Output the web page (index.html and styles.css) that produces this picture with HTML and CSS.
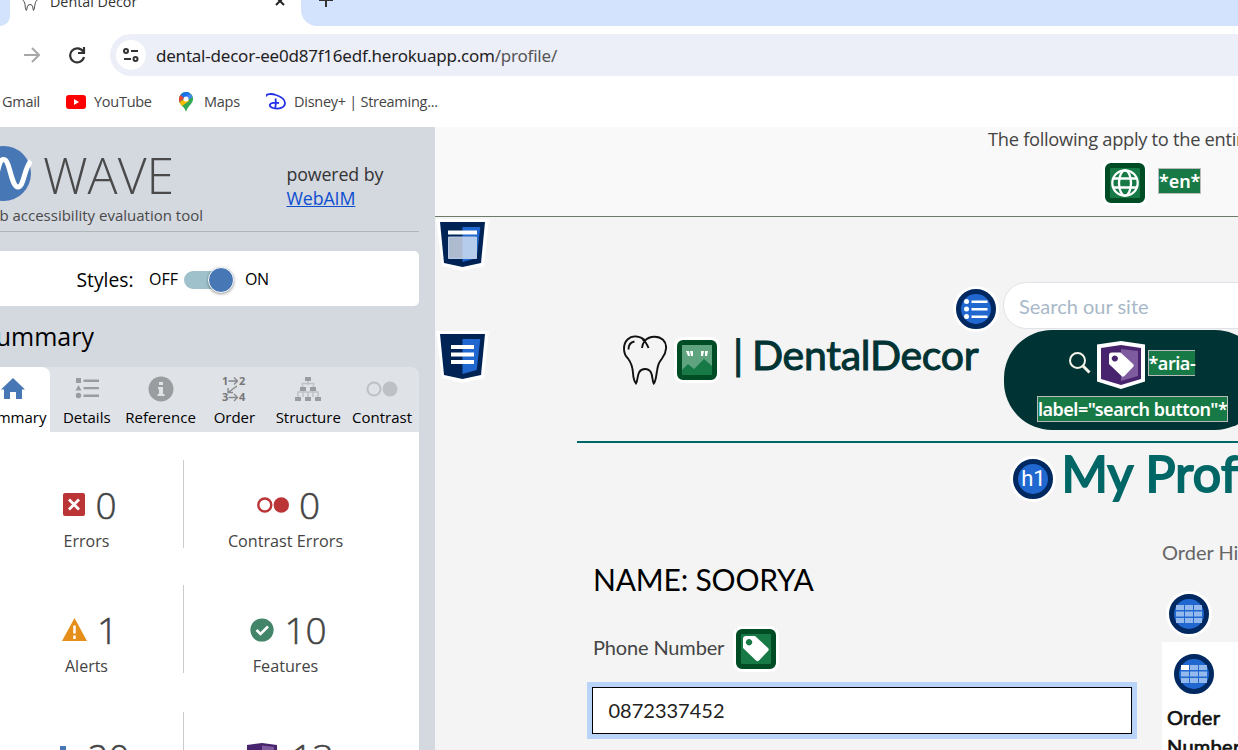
FILE: index.html
```html
<!DOCTYPE html>
<html lang="en">
<head>
<meta charset="utf-8">
<title>Dental Decor</title>
<link rel="stylesheet" href="styles.css">
</head>
<body>
<svg class="defs" width="0" height="0">
  <symbol id="tooth" viewBox="0 0 44 50"><path d="M22 5.500C17 0.500 9 0 4.500 4.500S-0.500 18 5 23.500C8.500 28 9.500 31 10 38c0.300 5 1 8 3 10.500 2.500-3 0-14.500 9-14.500s6.500 11.500 8.700 14.500C33 46 33 41 34 36c1-6 1.500-8 5-12.500C44 17 44.500 9 40 4.800S27 0.500 22 5.500Q19.500 8.500 19 13M19 4Q23 6.500 25.500 13M5.500 14.500Q5.500 7.500 11.500 6.500"/></symbol>
  <symbol id="tag" viewBox="0 0 26 26"><path fill-rule="evenodd" d="M0 3Q0 0 3 0H12L25 12Q26.500 13.500 25 15L16 24.500Q14.500 26 13 24.500L0 12ZM6 3a3.200 3.200 0 1 0 .1 0Z"/></symbol>
</svg>
<div class="tabstrip">
  <div class="strip-left"></div>
  <div class="tab">
    <svg class="tab-tooth" width="18" height="20"><use href="#tooth"/></svg>
    <span class="tab-title">Dental Decor</span>
    <svg class="tab-close" width="10" height="10" viewBox="0 0 10 10"><path d="M1 1l8 8M9 1l-8 8"/></svg>
  </div>
  <div class="strip-right"><svg width="14" height="14" viewBox="0 0 14 14"><path d="M0 7h14M7 0v14"/></svg></div>
</div>
<div class="toolbar">
  <svg class="forward" width="16" height="16" viewBox="0 0 16 16"><path d="M0 8h15M8 1l7 7-7 7"/></svg>
  <svg class="reload" width="18" height="18" viewBox="0 0 18 18"><path d="M15 5.500A7 7 0 1 0 16 11M16 1v6h-6"/></svg>
  <div class="omnibox">
    <div class="site-info"><svg width="16" height="14" viewBox="0 0 16 14"><g fill="none" stroke="#333" stroke-width="2"><circle cx="3" cy="3" r="2"/><path d="M8 3h7M1 11h7"/><circle cx="12.500" cy="11" r="2"/></g></svg></div>
    <span class="url">dental-decor-ee0d87f16edf.herokuapp.com<span class="path">/profile/</span></span>
  </div>
</div>
<div class="bookmarks">
  <span class="bm gmail">Gmail</span>
  <svg class="yt" width="20" height="14" viewBox="0 0 20 14"><rect width="20" height="14" rx="3" fill="#f00"/><path d="M8 4l5 3-5 3z" fill="#fff"/></svg>
  <span class="bm youtube">YouTube</span>
  <svg class="pin" width="14" height="20" viewBox="0 0 14 20"><path d="M0.500 10.500C-1 5 2 0 7 0s8.500 5 6.500 9.500C12 13 9 14 7 20 6 15 2 14 .500 10.500z" fill="#34a853"/><path d="M1.500 3C3.500 0 8 -1 11 1.500L4 9Z" fill="#1a73e8"/><path d="M1.500 3L5 6 0.500 10.500Q-1 6 1.500 3z" fill="#ea4335"/><path d="M.500 10.500L9 4l1 5L3 14Z" fill="#fbbc04"/><path d="M11 1.500Q13 3 13.500 5L9 8 7 5Z" fill="#4285f4"/><circle cx="7" cy="7" r="2.500" fill="#fff"/></svg>
  <span class="bm maps">Maps</span>
  <svg class="disney" width="20" height="17" viewBox="0 0 20 17"><path d="M.500 3.500C-.500 .500 6 .500 10 2c6 2 9 4.500 9 8 0 5-6.500 6.500-12 5-4.500-1.300-4-4.500 0-5.200q3-.500 6 .200M9.500 5.500Q10.200 10 9.300 15"/></svg>
  <span class="bm dis">Disney+ | Streaming...</span>
</div>
<div class="main">
  <aside class="sidebar">
    <div class="wave-head">
      <div class="wave-brand">
        <div class="wave-row">
          <svg width="32" height="56" viewBox="0 0 32 56"><circle cx="3.500" cy="27.500" r="27.500" fill="#4877b6"/><path d="M-5 37C-1 18 0 13 4 13.500 10 14 11 41 18 41 24 41 24 22 31 15" fill="none" stroke="#fff" stroke-width="5"/></svg>
          <span class="wave-name">WAVE</span>
        </div>
        <div class="tagline"><span>web accessibility evaluation tool</span></div>
      </div>
      <div class="powered">powered by<br><a>WebAIM</a></div>
    </div>
    <div class="styles-box">
      <span class="styles-label">Styles:</span><span class="off">OFF</span>
      <span class="switch"><span class="knob"></span></span><span class="on">ON</span>
    </div>
    <h2 class="summary-title"><span>Summary</span></h2>
    <nav class="tabs">
      <div class="wtab active"><svg width="26" height="24" viewBox="0 0 26 24"><path d="M13 1L1 12.500h3V22h6v-7h6v7h6v-9.500h3z" fill="#4877b6"/></svg><span>Summary</span></div>
      <div class="wtab"><svg class="details" width="24" height="24" viewBox="0 0 24 24"><g fill="#9a9d9f"><path d="M1 2h5v5H1zM3.500 9L6.500 14.500H.500zM8.500 3.500H24V6H8.500zM8.500 11H24v2.300H8.500zM8.500 18.500H24v2.500H8.500z"/><circle cx="3.500" cy="19.500" r="2.700"/></g></svg><span>Details</span></div>
      <div class="wtab"><svg width="26" height="26" viewBox="0 0 26 26"><circle cx="13" cy="13" r="12.500" fill="#9a9d9f"/><path d="M11 6h4v3h-4zM10 11h5v7h1.500v2H9.500v-2H11v-5h-1z" fill="#dfe2e7"/></svg><span>Reference</span></div>
      <div class="wtab"><svg class="order" width="26" height="26" viewBox="0 0 26 26"><g class="digits"><text x="1" y="8.500">1</text><text x="18" y="8.500">2</text><text x="1" y="25">3</text><text x="18" y="25">4</text></g><path d="M7.500 5h9M13 1.500l3.500 3.500-3.500 3.500M7.500 21.500h9M13 18l3.500 3.500-3.500 3.500M16 10l-9 6.500M7 12v4.500h5" fill="none" stroke="#85888a" stroke-width="1.300"/></svg><span>Order</span></div>
      <div class="wtab"><svg width="26" height="26" viewBox="0 0 26 26"><path d="M13 4v5M7.500 12V7.500h11V12M3 21v-5h20v5M8 13v8M18 13v8M13 16v5" fill="none" stroke="#bfc2c6" stroke-width="1.500"/><path d="M10 1h6v4h-6zM5 11h6v4H5zM15 11h6v4h-6zM0 21h6v4H0zM10 21h6v4h-6zM20 21h6v4h-6z" fill="#9a9d9f"/></svg><span>Structure</span></div>
      <div class="wtab"><svg width="32" height="26" viewBox="0 0 32 26"><circle cx="8" cy="13" r="6.500" fill="none" stroke="#bdc1c6" stroke-width="2"/><circle cx="24" cy="13" r="7.500" fill="#bdc1c6"/></svg><span>Contrast</span></div>
    </nav>
    <div class="panel">
      <div class="stat"><div class="num"><svg width="22" height="23" viewBox="0 0 22 23"><rect width="22" height="23" rx="2" fill="#bb3537"/><path d="M6 6.500l10 10M16 6.500l-10 10" stroke="#fff" stroke-width="2.800"/></svg>0</div><div class="lbl">Errors</div></div>
      <div class="stat line"><div class="num"><svg width="32" height="16" viewBox="0 0 32 16"><circle cx="7.800" cy="8" r="6.500" fill="none" stroke="#bb3537" stroke-width="2.400"/><circle cx="24.300" cy="8" r="7.700" fill="#bb3537"/></svg>0</div><div class="lbl contrast">Contrast Errors</div></div>
      <div class="stat"><div class="num alert"><svg width="25" height="23" viewBox="0 0 25 23"><path d="M12.500 0L25 23H0z" fill="#e58e1a"/><path d="M12.500 7.500v8M12.500 17.500V21" stroke="#fff" stroke-width="2.500"/></svg>1</div><div class="lbl">Alerts</div></div>
      <div class="stat line"><div class="num"><svg width="24" height="24" viewBox="0 0 24 24"><circle cx="12" cy="12" r="11.600" fill="#428568"/><path d="M6.500 12l4 4 7.500-7.500" fill="none" stroke="#fff" stroke-width="2.500"/></svg>10</div><div class="lbl contrast">Features</div></div>
      <div class="stat"><div class="num last"><svg width="23" height="24" viewBox="0 0 23 24"><path d="M6 1h6v4h-2v5h6v4h-2v-2H8V5H6z" fill="#4877b6"/></svg>20</div></div>
      <div class="stat line"><div class="num last wide"><svg width="30" height="28" viewBox="0 0 30 28"><path d="M0 2L15 0l15 2v22l-15 4-15-4z" fill="#47246d"/><path d="M15 2.500l12 1.500V22l-12 4z" fill="#7e5b9e"/></svg>13</div></div>
    </div>
  </aside>
  <section class="page">
    <div class="notice">
      <div class="notice-text">The following apply to the entire page:</div>
      <div class="notice-row">
        <div class="green"><svg width="28" height="28" viewBox="0 0 28 28" fill="none" stroke="#fff" stroke-width="2.300"><circle cx="14" cy="14" r="12.700"/><ellipse cx="14" cy="14" rx="6" ry="12.700"/><path d="M2.500 9.500h23M2.500 18.500h23"/></svg></div>
        <span class="mark">*en*</span>
      </div>
    </div>
    <div class="site">
      <div class="rail">
        <svg class="region" width="54" height="54" viewBox="0 0 54 54"><path d="M1 1h53l-5 47-21 5-21-5z" fill="#fff"/><path d="M5 4h45l-4 41-18.500 4L9 45z" fill="#002356"/><path d="M27.500 9h17.800l-3.600 31-14.200 4z" fill="#2068d0"/><path d="M13 12.500h29v4H13z" fill="#fff"/><path d="M13.500 19h28v21.500h-28z" fill="#e8edf5" fill-opacity=".75" stroke="#b8cbe6"/></svg>
        <svg class="region" width="54" height="54" viewBox="0 0 54 54"><path d="M1 1h53l-5 47-21 5-21-5z" fill="#fff"/><path d="M5 4h45l-4 41-18.500 4L9 45z" fill="#002356"/><path d="M27.500 9h17.800l-3.600 31-14.200 4z" fill="#2068d0"/><path d="M16 15h23v4H16zM16 22.500h23v4H16zM16 30h23v4H16z" fill="#fff"/></svg>
      </div>
      <div class="body">
        <header class="site-head">
          <div class="brand">
            <svg class="logo" width="44" height="50" viewBox="0 0 44 50"><use href="#tooth"/></svg>
            <div class="green"><svg width="30" height="30" viewBox="0 0 30 30"><path d="M0 0h30v30H0z" fill="#5fa47f"/><path d="M0 25l6-6 6 5 10-10 8 7v9H0z" fill="#177a46"/><path d="M4 6h3l1 5H6zM8 6h3v5H9zM19 6h3l-1 5h-2zM23 6h3l-1 5h-2z" fill="#fff"/></svg></div>
            <span class="name"><span class="bar">|</span>DentalDecor</span>
          </div>
          <div class="circle list"><svg width="28" height="24" viewBox="0 0 28 24" fill="#fff"><circle cx="4.500" cy="4.500" r="2.500"/><circle cx="4.500" cy="12" r="2.500"/><circle cx="4.500" cy="19.500" r="2.500"/><path d="M9.500 3.500h16v2.500h-16zM9.500 11h16v2.500h-16zM9.500 18.500h16V21h-16z"/></svg></div>
          <div class="search">
            <div class="field">Search our site</div>
            <div class="button">
              <div class="brow">
                <svg class="lens" width="22" height="22" viewBox="0 0 22 22"><circle cx="8.500" cy="8.500" r="7.500" fill="none" stroke="#f4f4e8" stroke-width="2"/><path d="M13.500 13.500l7 7" stroke="#f4f4e8" stroke-width="3"/></svg>
                <svg width="48" height="48" viewBox="0 0 48 48"><path d="M0 3.500L24 0l24 3.500v37L24 48 0 40.500z" fill="#fff"/><path d="M4 7l20-3 20 3v31l-20 6-20-6z" fill="#47246d"/><path d="M24 8l17 2v25l-17 5z" fill="#7e5b9e"/><svg x="12" y="11" width="25" height="26"><use href="#tag" fill="#fff"/></svg></svg>
                <span class="mark aria">*aria-</span>
              </div>
              <span class="mark label">label="search button"*</span>
            </div>
          </div>
        </header>
        <div class="title-row"><div class="circle h1">h1</div><h1>My Profile</h1></div>
        <div class="columns">
          <div class="profile">
            <div class="person">NAME: SOORYA</div>
            <div class="phone"><span>Phone Number</span><div class="green"><svg width="26" height="26"><use href="#tag" fill="#fff"/></svg></div></div>
            <div class="phone-field">0872337452</div>
          </div>
          <div class="orders">
            <div class="orders-title">Order History</div>
            <div class="circle table"><svg width="26" height="18" viewBox="0 0 26 18" fill="#94b9ed"><path d="M0 0h8v5H0zM9 0h8v5H9zM18 0h8v5h-8zM0 6.500h8v5H0zM9 6.500h8v5H9zM18 6.500h8v5h-8zM0 13h8v5H0zM9 13h8v5H9zM18 13h8v5h-8z"/></svg></div>
            <div class="otable">
              <div class="circle"><svg width="26" height="18" viewBox="0 0 26 18" fill="#94b9ed"><path d="M9 0h8v5H9zM18 0h8v5h-8zM0 6.500h8v5H0zM9 6.500h8v5H9zM18 6.500h8v5h-8zM0 13h8v5H0zM9 13h8v5H9zM18 13h8v5h-8z"/><path d="M0 0h8v5H0z" fill="#fff"/></svg></div>
              <div class="oth">Order<br>Number</div>
            </div>
          </div>
        </div>
      </div>
    </div>
  </section>
</div>
</body>
</html>
```
FILE: styles.css
```css
* { box-sizing: border-box; }
body { margin: 0; width: 1238px; height: 750px; overflow: hidden; background: #fff; display: flex; flex-direction: column; font-family: "Open Sans", sans-serif; white-space: nowrap; }
svg { display: block; flex: none; }
.defs { position: absolute; }
#tooth path { fill: none; stroke: #111; stroke-width: 1.9; }

.tabstrip { height: 26px; display: flex; flex: none; background: #fff; overflow: hidden; }
.strip-left { width: 10px; background: #d3e3fd; border-bottom-right-radius: 12px; }
.tab { width: 291px; display: flex; align-items: flex-start; }
.tab-tooth { margin: -9px 0 0 11px; }
.tab-title { width: 225px; margin: -8px 0 0 11px; font-size: 14.300px; line-height: 20px; color: #333; }
.tab-close { margin-top: -4px; stroke: #222; stroke-width: 2; }
.strip-right { flex: 1; background: #d3e3fd; border-bottom-left-radius: 16px; padding-left: 18px; stroke: #333; stroke-width: 2; }
.strip-right svg { margin-top: -7px; }

.toolbar { height: 50px; flex: none; display: flex; align-items: center; padding: 7px 0 0 24px; }
.forward { fill: none; stroke: #a8a8a8; stroke-width: 2; }
.reload { margin-left: 28px; fill: none; stroke: #333; stroke-width: 2.2; }
.omnibox { margin-left: 24px; flex: 1; height: 42px; background: #eceef8; border-radius: 21px 0 0 21px; display: flex; align-items: center; padding-left: 6px; }
.site-info { width: 30px; height: 30px; border-radius: 50%; background: #fff; display: flex; align-items: center; justify-content: center; }
.url { margin: 1px 0 0 10px; font-family: "Noto Sans", sans-serif; font-size: 17px; letter-spacing: -0.22px; color: #1f1f1f; }
.path { color: #555; }

.bookmarks { height: 51px; flex: none; display: flex; align-items: center; font-size: 14.500px; letter-spacing: -0.27px; color: #444; padding-left: 2px; }
.bm { flex: none; }
.gmail { width: 64px; }
.youtube { margin-left: 8px; width: 85px; }
.maps { margin-left: 11px; width: 62px; }
.dis { margin-left: 8px; }
.disney { fill: none; stroke: #2230e8; stroke-width: 1.800; }

.main { flex: 1; min-height: 0; display: flex; }
.sidebar { width: 435px; flex: none; background: #d4d8df; padding-right: 16px; display: flex; flex-direction: column; overflow: hidden; }
.wave-head { height: 105px; flex: none; border-bottom: 1px solid #b0b5bb; display: flex; }
.wave-brand { width: 286.500px; color: #4a4a4a; padding-top: 19px; }
.wave-row { display: flex; height: 56px; }
.wave-name { margin-left: 11px; font-size: 50px; font-weight: 300; line-height: 58px; }
.tagline { width: 203px; display: flex; justify-content: flex-end; font-size: 15px; line-height: 26px; overflow: hidden; }
.powered { padding-top: 35px; font-size: 17.800px; letter-spacing: -0.12px; line-height: 24px; color: #333; }
.powered a { color: #0b4fd0; text-decoration: underline; }
.styles-box { margin-top: 19px; height: 55px; flex: none; background: #fff; border-radius: 0 5px 5px 0; padding-left: 76.500px; display: flex; align-items: center; font-size: 16px; }
.styles-label { width: 72.500px; font-size: 19.300px; padding-top: 2px; }
.off { width: 35px; }
.switch { width: 50px; height: 18px; border-radius: 9px; background: #9fc1cb; display: flex; align-items: center; justify-content: flex-end; margin-top: 3px; }
.knob { width: 26px; height: 26px; flex: none; border-radius: 50%; background: #4877b6; border: 1px solid #fff; box-shadow: 0 1px 3px #0006; }
.on { margin-left: 11px; letter-spacing: -0.4px; }
.summary-title { margin: 0; height: 61px; width: 94px; display: flex; justify-content: flex-end; font-size: 25px; font-weight: 400; line-height: 61px; flex: none; overflow: hidden; }
.tabs { margin-left: -24px; height: 65px; flex: none; display: flex; background: #dfe2e7; border-radius: 0 8px 0 0; }
.wtab { flex: 1 1 0; min-width: 0; display: flex; flex-direction: column; align-items: center; font-size: 15px; }
.wtab svg { margin: 9px 0 3px; height: 26px; }
.wtab .details { margin: 8px 0 4px; }
.wtab span { line-height: 24px; }
.active { background: #fff; border-radius: 0 8px 0 0; }
.digits { font-size: 11px; font-weight: 700; fill: #777; }
.panel { flex: 1; min-height: 0; background: #fff; padding-top: 28px; display: grid; grid-template-columns: 183px 203px; grid-template-rows: 125px 127px 88px; overflow: hidden; }
.stat { color: #444; height: 88px; }
.stat:nth-child(odd) { margin-left: -10px; }
.line { border-left: 1px solid #c9cbce; }
.num { display: flex; align-items: center; justify-content: center; gap: 10px; font-size: 37px; font-weight: 300; -webkit-text-stroke: 0.5px #444; line-height: 40px; padding: 25px 0 0 7px; }
.num svg { margin-top: -1px; }
.last { padding-left: 11px; }
.wide { gap: 14px; }
.lbl { text-align: center; font-size: 16px; line-height: 32px; }
.contrast { font-size: 16.200px; padding-left: 1px; }

.page { flex: 1; min-width: 0; background: #f4f4f4; overflow: hidden; }
.notice { height: 90px; background: #f9f9f9; border-bottom: 1px solid #6d7b6b; color: #444; }
.notice-text { padding-left: 553px; font-size: 18.300px; letter-spacing: -0.29px; line-height: 24px; height: 26px; }
.notice-row { display: flex; padding: 10px 0 0 670.490px; align-items: flex-start; }
.green { width: 40px; height: 40px; flex: none; background: #177a46; border: 5px solid #004d25; border-radius: 6px; box-shadow: 0 0 0 3px #fff; display: flex; align-items: center; justify-content: center; }
.mark { background: #177a46; border: 1px solid #bbb; color: #fff; font-family: "Noto Sans", sans-serif; font-size: 18px; font-weight: 600; letter-spacing: -0.48px; line-height: 24px; height: 26px; }
.notice-row .mark { margin: 5px 0 0 12.500px; letter-spacing: -0.1px; }
.site { display: flex; }
.rail { width: 142px; padding: 1px 0 0; flex: none; }
.region { margin-bottom: 58px; }
.body { width: 1100px; flex: none; }
.site-head { height: 226px; border-bottom: 2px solid #066; display: flex; }
.brand { width: 379px; display: flex; padding: 118px 0 0 46px; font-family: Lato, sans-serif; }
.brand .green { margin: 5px 0 0 10.490px; }
.name { margin-left: 15.500px; color: #033; font-size: 41px; line-height: 40px; font-weight: 400; letter-spacing: -0.28px; -webkit-text-stroke: 1px #033; }
.bar { display: inline-block; width: 18px; margin-right: 1px; }
.circle { width: 40px; height: 40px; flex: none; border: 5px solid #002861; border-radius: 50%; background: #2068d0; box-shadow: 0 0 0 3px #fff; display: flex; align-items: center; justify-content: center; color: #fff; }
.list { margin-top: 72px; }
.search { margin: 65px 0 0 7px; width: 260px; }
.field { height: 47px; border: 1px solid #dfe3e9; border-radius: 24px; background: #fff; padding-left: 15px; font: 20px/47px Lato, sans-serif; color: #a8b8c8; }
.button { margin: 1px 0 0 1px; width: 259px; height: 100px; border-radius: 48px; background: #033; padding-top: 11px; }
.brow { display: flex; height: 55px; padding-left: 65px; }
.lens { margin: 11px 5.500px 0 0; }
.aria { margin: 9px 0 0 3px; border-right: 0; }
.label { display: block; margin-left: 33px; width: 191px; letter-spacing: -0.52px; }
.title-row { display: flex; height: 87px; padding: 16px 0 0 436.400px; }
.h1 { font: 22px/30px Roboto, sans-serif; }
h1 { margin: -16px 0 0 8px; font: 400 50px/60px Lato, sans-serif; letter-spacing: 0.3px; color: #066; -webkit-text-stroke: 2px #066; }
.columns { display: flex; padding-left: 10px; font-family: Lato, sans-serif; }
.profile { width: 575px; padding-top: 30px; }
.person { margin-left: 6px; font-size: 30px; letter-spacing: -0.18px; line-height: 38px; }
.phone { display: flex; margin: 31px 0 0 6px; font-size: 20px; letter-spacing: -0.15px; line-height: 36px; color: #444; height: 53px; }
.phone span { width: 143px; }
.phone-field { width: 550px; height: 57px; border: 5px solid #bad3f8; background: #fff; outline: 1px solid #000; outline-offset: -6px; padding-left: 16.500px; font-size: 20px; line-height: 47px; color: #222; }
.orders { flex: 1; padding-top: 9px; }
.orders-title { font-size: 20px; line-height: 26px; color: #666; }
.table { margin: 29px 0 0 7px; }
.otable { margin-top: 8px; background: #fff; height: 200px; padding: 12px 0 0 5px; }
.otable .circle { margin-left: 7px; }
.oth { margin-top: 9px; font-size: 20px; font-weight: 400; -webkit-text-stroke: 0.7px #111; letter-spacing: 0.3px; line-height: 29px; color: #111; }
```
